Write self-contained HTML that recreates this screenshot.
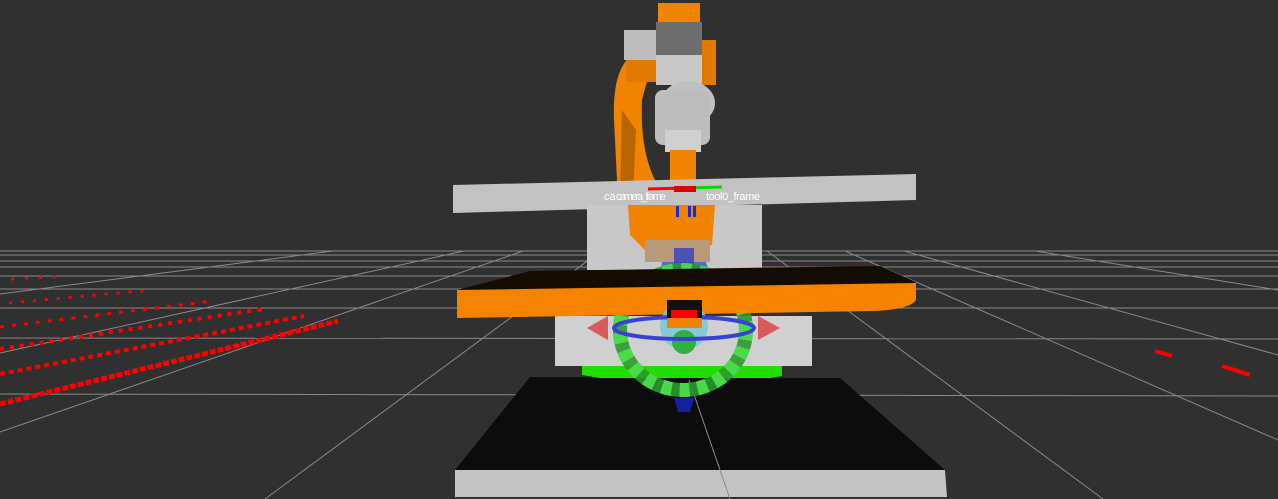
<!DOCTYPE html>
<html><head><meta charset="utf-8"><style>
html,body{margin:0;padding:0;background:#303030;}
svg{display:block}
</style></head><body>
<svg width="1278" height="499" viewBox="0 0 1278 499" xmlns="http://www.w3.org/2000/svg">
<rect width="1278" height="499" fill="#303030"/>
<g stroke="#8a8a8a" stroke-width="1" fill="none">
<line x1="0" y1="251" x2="1278" y2="251"/>
<line x1="0" y1="255" x2="1278" y2="255"/>
<line x1="0" y1="261" x2="1278" y2="261"/>
<line x1="0" y1="267" x2="1278" y2="267"/>
<line x1="0" y1="276" x2="1278" y2="276"/>
<line x1="0" y1="289" x2="1278" y2="289"/>
<line x1="0" y1="308" x2="1278" y2="308"/>
<line x1="0" y1="338" x2="1278" y2="339"/>
<line x1="0" y1="394" x2="1278" y2="396"/>
<line x1="333" y1="251" x2="0" y2="294"/>
<line x1="464" y1="251" x2="0" y2="353"/>
<line x1="523" y1="251" x2="0" y2="432"/>
<line x1="601" y1="251" x2="265" y2="499"/>
<line x1="767" y1="251" x2="1103" y2="499"/>
<line x1="845" y1="251" x2="1278" y2="440"/>
<line x1="904" y1="251" x2="1278" y2="355"/>
<line x1="1035" y1="251" x2="1278" y2="290"/>
</g>
<g>
<line x1="11" y1="279" x2="67" y2="276" stroke="#ff0000" stroke-width="3" stroke-dasharray="3,11"/>
<line x1="9" y1="303" x2="150" y2="290" stroke="#ff0000" stroke-width="3" stroke-dasharray="3,9"/>
<line x1="0" y1="327" x2="213" y2="301" stroke="#ff0000" stroke-width="3" stroke-dasharray="4,8"/>
<line x1="0" y1="349" x2="263" y2="309" stroke="#ff0000" stroke-width="4" stroke-dasharray="4,6"/>
<line x1="0" y1="374" x2="304" y2="316" stroke="#ff0000" stroke-width="4" stroke-dasharray="5,4"/>
<line x1="0" y1="404" x2="338" y2="321" stroke="#ff0000" stroke-width="5" stroke-dasharray="6,2"/>
<line x1="1155" y1="351" x2="1172" y2="356" stroke="#ff0000" stroke-width="4"/>
<line x1="1222" y1="366" x2="1250" y2="375" stroke="#ff0000" stroke-width="4"/>
</g>
<!-- robot -->
<path d="M632 55 Q612 70 614 120 L618 200 Q625 225 645 240 L665 225 L655 180 Q640 150 642 100 L650 70 Z" fill="#f08300"/>
<path d="M622 110 L620 195 L632 215 L636 130 Z" fill="#b86400"/>
<rect x="658" y="3" width="42" height="30" fill="#f08300"/>
<rect x="624" y="30" width="34" height="30" fill="#bdbdbd"/>
<rect x="626" y="60" width="30" height="22" fill="#e07a00"/>
<rect x="698" y="40" width="18" height="45" fill="#e07a00"/>
<rect x="656" y="22" width="46" height="55" fill="#6e6e6e"/>
<rect x="656" y="55" width="46" height="30" fill="#c8c8c8"/>
<ellipse cx="688" cy="103" rx="27" ry="22" fill="#c0c0c0"/>
<rect x="655" y="90" width="55" height="55" rx="8" fill="#bdbdbd"/>
<rect x="665" y="130" width="36" height="22" fill="#d0d0d0"/>
<rect x="670" y="150" width="26" height="40" fill="#f08300"/>
<!-- top slab -->
<polygon points="453,185 916,174 916,200 453,213" fill="#c2c2c2"/>
<rect x="587" y="205" width="175" height="65" fill="#c8c8c8"/>
<path d="M628 205 L715 205 L712 245 L690 250 L645 250 L630 235 Z" fill="#f08300"/>
<rect x="645" y="240" width="65" height="22" fill="#b89a7a"/>
<line x1="648" y1="189" x2="685" y2="188" stroke="#ff0000" stroke-width="3"/>
<line x1="685" y1="188" x2="722" y2="187" stroke="#00dd00" stroke-width="3"/>
<rect x="674" y="186" width="22" height="6" fill="#dd0000"/>
<g fill="#1a2ad0"><rect x="676" y="206" width="3" height="11"/><rect x="688" y="206" width="3" height="11"/><rect x="693" y="206" width="3" height="11"/></g>
<text x="604" y="200" font-family="Liberation Sans, sans-serif" font-size="11" fill="#ffffff">ca</text>
<text x="616" y="200" font-family="Liberation Sans, sans-serif" font-size="11" fill="#ffffff" textLength="50">camera_frame</text>
<text x="706" y="200" font-family="Liberation Sans, sans-serif" font-size="11" fill="#ffffff" textLength="54">tool0_frame</text>
<polygon points="662,262 706,262 710,275 660,275" fill="#3a50d0" opacity="0.8"/>
<rect x="674" y="248" width="20" height="28" fill="#3040c0" opacity="0.8"/>
<!-- base -->
<polygon points="455,470 530,377 840,378 945,470" fill="#0c0c0c"/>
<polygon points="455,470 945,470 947,497 455,497" fill="#c4c4c4"/>
<line x1="689" y1="380" x2="730" y2="499" stroke="#8a8a8a" stroke-width="1"/>
<!-- lower box -->
<rect x="555" y="316" width="257" height="50" fill="#d0d0d0"/>
<path d="M582 366 L782 366 L782 376 L770 378 L600 378 L582 375 Z" fill="#22dd00"/>
<ellipse cx="683" cy="330" rx="63" ry="60" fill="none" stroke="#2a9a2a" stroke-width="14" opacity="0.9"/>
<ellipse cx="683" cy="330" rx="63" ry="60" fill="none" stroke="#4ee04e" stroke-width="14" stroke-dasharray="10,8" opacity="0.9"/>
<polygon points="674,398 694,398 690,412 678,412" fill="#1520a0"/>
<!-- orange table -->
<polygon points="457,290 530,271 880,266 916,282 916,290 457,297" fill="#140c00"/>
<path d="M457 290 L916 283 L916 300 Q910 310 870 311 L457 318 Z" fill="#f58300"/>
<circle cx="684" cy="326" r="24" fill="#7ac8d8" opacity="0.85"/>
<circle cx="684" cy="342" r="12" fill="#30b040"/>
<ellipse cx="684" cy="328" rx="70" ry="11" fill="none" stroke="#3a40d0" stroke-width="4"/>
<polygon points="587,328 608,316 608,340" fill="#d85a5a"/>
<polygon points="780,328 758,316 758,340" fill="#d85a5a"/>
<rect x="667" y="300" width="35" height="28" fill="#111"/>
<rect x="671" y="310" width="26" height="12" fill="#f00"/>
<rect x="667" y="318" width="35" height="10" fill="#f08300"/>
</svg>
</body></html>
